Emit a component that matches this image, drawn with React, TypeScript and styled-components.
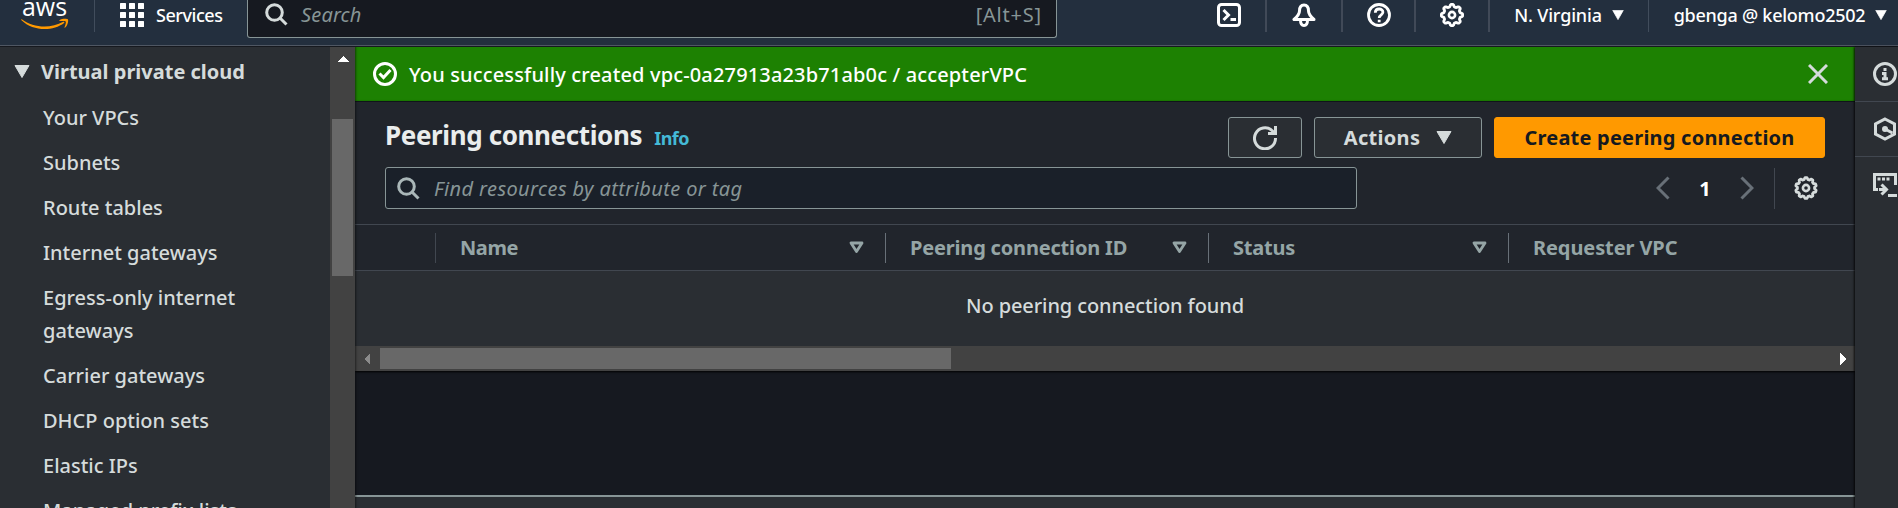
import React from "react";
import styled, { createGlobalStyle } from "styled-components";

const GlobalStyle = createGlobalStyle`
  *, *::before, *::after { box-sizing: border-box; }
  html, body { margin: 0; padding: 0; overflow: hidden; background: #161920; }
  body { font-family: "Noto Sans", "Open Sans", sans-serif; color: #d5dbdb; }
  svg { display: block; flex: none; }
  button { font-family: inherit; }
`;

const Page = styled.div`
  height: 508px;
  width: 1898px;
  display: flex;
  flex-direction: column;
  overflow: hidden;
`;

const Label = styled.span<{ $size: number; $track?: number; $weight?: number; $color?: string; $italic?: boolean }>`
  font-size: ${(p) => p.$size}px;
  letter-spacing: ${(p) => p.$track ?? 0}px;
  font-weight: ${(p) => p.$weight ?? 400};
  color: ${(p) => p.$color ?? "inherit"};
  font-style: ${(p) => (p.$italic ? "italic" : "normal")};
  white-space: nowrap;
`;

/* ---------- top navigation ---------- */
const TopNav = styled.header`
  flex: none;
  height: 47px;
  background: #232f3e;
  border-bottom: 1px solid #16191f;
  box-shadow: inset 0 -1px 0 #4f5763;
  display: flex;
  align-items: flex-start;
  color: #fff;
`;
const LogoCell = styled.div`
  width: 95px;
  height: 32px;
  padding-left: 21px;
  border-right: 1px solid #414d5c;
`;
const ServicesCell = styled.div`
  width: 152px;
  height: 30px;
  padding-left: 25px;
  display: flex;
  align-items: center;
  gap: 12px;
`;
const GlobalSearch = styled.div`
  width: 810px;
  height: 38px;
  padding: 0 14px 8px 17px;
  background: #161920;
  border: 1px solid #879596;
  border-top: 0;
  border-radius: 0 0 3px 3px;
  display: flex;
  align-items: center;
  gap: 13px;
`;
const Shortcut = styled.div`
  margin-left: auto;
`;
const NavTools = styled.div`
  flex: 1;
  display: flex;
  justify-content: flex-end;
`;
const NavCell = styled.div<{ $width: number; $last?: boolean; $thin?: boolean }>`
  width: ${(p) => p.$width}px;
  height: 32px;
  padding: 0 0 2px ${(p) => (p.$last ? "14px" : "0")};
  display: flex;
  align-items: center;
  justify-content: center;
  gap: 10px;
  border-right: ${(p) => (p.$last ? "0" : p.$thin ? "1px solid #414d5c" : "2px solid #414a58")};
`;

/* ---------- body ---------- */
const Body = styled.div`
  flex: 1;
  min-height: 0;
  display: flex;
`;
const SideNav = styled.nav`
  width: 330px;
  flex: none;
  background: #2a2e33;
  padding-top: 8px;
  overflow: hidden;
`;
const SectionTitle = styled.div`
  height: 33px;
  margin-bottom: 13px;
  padding-left: 14px;
  display: flex;
  align-items: center;
  gap: 11px;
`;
const NavList = styled.ul`
  list-style: none;
  margin: 0;
  padding: 0 0 0 43px;
`;
const NavItem = styled.li`
  line-height: 33px;
  margin-bottom: 12px;
  width: 240px;
`;
const NavLink = styled.a`
  display: block;
  font-size: 20px;
  font-weight: 500;
  white-space: pre-line;
`;
const VScroll = styled.div`
  width: 25px;
  flex: none;
  background: #424242;
  display: flex;
  flex-direction: column;
  align-items: center;
  gap: 57px;
  padding-top: 9px;
  position: relative;
  z-index: 1;
  box-shadow: 0 0 2px 1px rgba(0, 0, 0, 0.5);
  clip-path: inset(0 -4px 0 0);
`;
const VThumb = styled.div`
  width: 21px;
  height: 157px;
  background: #686868;
`;
const Main = styled.main`
  width: 1500px;
  flex: none;
  display: flex;
  flex-direction: column;
  background: #161920;
  overflow: hidden;
`;
const Flash = styled.div`
  height: 54px;
  flex: none;
  background: #1d8102;
  color: #fff;
  display: flex;
  align-items: center;
  padding: 0 27px 0 18px;
  gap: 12px;
`;
const CloseIcon = styled.div`
  margin-left: auto;
`;
const Container = styled.section`
  height: 270px;
  flex: none;
  background: #21252c;
  border-top: 1px solid #10141a;
  box-shadow: 0 1px 2px 0 #000;
`;
const TitleRow = styled.div`
  height: 57px;
  padding: 15px 30px 0;
  display: flex;
  justify-content: space-between;
`;
const Title = styled.div`
  display: flex;
  align-items: baseline;
  gap: 12px;
  line-height: 36px;
`;
const Actions = styled.div`
  display: flex;
  gap: 12px;
`;
const Button = styled.button<{ $width: number; $primary?: boolean }>`
  width: ${(p) => p.$width}px;
  height: 41px;
  padding: 0;
  border: 1px solid ${(p) => (p.$primary ? "#ff9900" : "#879596")};
  border-radius: 3px;
  background: ${(p) => (p.$primary ? "#ff9900" : "#2a2e33")};
  color: ${(p) => (p.$primary ? "#16191f" : "#d5dbdb")};
  display: flex;
  align-items: center;
  justify-content: center;
  gap: 16px;
`;
const FilterRow = styled.div`
  height: 65px;
  padding: 8px 30px 0;
  display: flex;
  justify-content: space-between;
`;
const FilterInput = styled.div`
  width: 972px;
  height: 42px;
  padding-left: 11px;
  background: #1a2029;
  border: 1px solid #879596;
  border-radius: 3px;
  display: flex;
  align-items: center;
  gap: 14px;
`;
const Pager = styled.div`
  display: flex;
  align-items: center;
  height: 42px;
  color: #fff;
`;
const PageNumber = styled.div`
  width: 70px;
  text-align: center;
`;
const PagerSettings = styled.div`
  height: 41px;
  margin-left: 20px;
  padding: 0 7px 0 19px;
  border-left: 1px solid #414750;
  display: flex;
  align-items: center;
`;
const HeadRow = styled.div`
  height: 47px;
  border: solid #414750;
  border-width: 1px 0;
  display: flex;
  align-items: center;
`;
const HeadCell = styled.div<{ $width: number; $line?: string }>`
  width: ${(p) => p.$width}px;
  height: 30px;
  padding: 0 21px 0 24px;
  border-right: ${(p) => (p.$line ? `1px solid ${p.$line}` : "0")};
  display: flex;
  align-items: center;
  justify-content: space-between;
  flex: none;
`;
const Empty = styled.div`
  height: 75px;
  padding: 0 0 7px 0;
  background: #2a2e33;
  display: flex;
  align-items: center;
  justify-content: center;
`;
const HScroll = styled.div`
  height: 25px;
  background: #424242;
  display: flex;
  align-items: center;
  padding: 0 9px;
  gap: 10px;
`;
const HThumb = styled.div`
  width: 571px;
  height: 21px;
  background: #686868;
`;
const ScrollEnd = styled.div`
  margin-left: auto;
`;
const SplitPanel = styled.div`
  height: 13px;
  margin-top: auto;
  background: #2a2e33;
  border-top: 2px solid #879596;
`;
const Rail = styled.aside`
  width: 43px;
  flex: none;
  background: #2a2e33;
  box-shadow: -1px 0 2px rgba(0, 0, 0, 0.8);
`;
const RailItem = styled.div<{ $last?: boolean }>`
  height: 55px;
  padding-left: 18px;
  display: flex;
  align-items: center;
  border-bottom: ${(p) => (p.$last ? "0" : "1px solid #414750")};
`;

/* ---------- icons ---------- */
const Caret = ({ w, h, color }: { w: number; h: number; color: string }) => (
  <svg width={w} height={h} viewBox="0 0 16 13" preserveAspectRatio="none">
    <path d="M1 .5h14L8 12.5z" fill={color} stroke={color} strokeLinejoin="round" />
  </svg>
);
const SortIcon = () => (
  <svg width="15" height="13" viewBox="0 0 15 13">
    <path d="M2 2h11L7.500 10.500z" fill="none" stroke="#95a5a6" strokeWidth="2.800" strokeLinejoin="round" />
  </svg>
);
const ScrollArrow = ({ d, w, h, color }: { d: string; w: number; h: number; color: string }) => (
  <svg width={w} height={h} shapeRendering="crispEdges"><path d={d} fill={color} /></svg>
);
const SearchIcon = ({ color }: { color: string }) => (
  <svg width="23" height="23" viewBox="0 0 23 23" fill="none" stroke={color} strokeWidth="3">
    <circle cx="9.500" cy="9.500" r="7.800" /><path d="M15 15l6.500 6.500" />
  </svg>
);
const Gear = ({ color, teeth, depth }: { color: string; teeth: number; depth: number }) => {
  const pts: string[] = [];
  const n = teeth * 16;
  for (let i = 0; i < n; i++) {
    const a = (i / n) * Math.PI * 2;
    const wave = Math.max(-1, Math.min(1, Math.cos(a * teeth) * 1.7));
    const r = 9.5 + depth * wave;
    pts.push(`${(12 + r * Math.sin(a)).toFixed(2)},${(12 - r * Math.cos(a)).toFixed(2)}`);
  }
  return (
    <svg width="24" height="24" fill="none" stroke={color}>
      <polygon points={pts.join(" ")} strokeWidth="2.800" strokeLinejoin="round" />
      <circle cx="12" cy="12" r="3.100" strokeWidth="2.600" />
    </svg>
  );
};
const AwsLogo = () => (
  <svg width="48" height="32" viewBox="0 0 48 32">
    <text x="1" y="15.500" fontSize="25" fontFamily="Open Sans" fontWeight="500" fill="#fff" textLength="45" lengthAdjust="spacingAndGlyphs">aws</text>
    <path d="M.8 19.300c12 9 29 9.500 41.500 2.500.8-.4 1.500.5.8 1.200C32 31.500 12 31.500.5 20.300c-.5-.5-.3-1.200.3-1z" fill="#ff9900" />
    <path d="M38.500 20.200c2-1.500 7.500-1.900 8.400-.8.800 1.200-.3 6-2.700 8.200-.5.400-.9.200-.7-.4.700-1.600 1.800-4.900 1.200-5.700-.6-.8-4-.6-5.700-.4-.7.100-.9-.5-.5-.9z" fill="#ff9900" />
  </svg>
);
const AppsIcon = () => (
  <svg width="24" height="24" fill="#fff">
    {[0, 9, 18].map((y) => [0, 9, 18].map((x) => <rect key={`${x}-${y}`} x={x} y={y} width="6" height="6" rx=".5" />))}
  </svg>
);
const TerminalIcon = () => (
  <svg width="24" height="24" fill="none" stroke="#fff" strokeWidth="3">
    <rect x="1.500" y="1.500" width="21" height="21" rx="3" />
    <path d="M6.500 7l5 5-5 5M13.500 16.500h5.500" />
  </svg>
);
const BellIcon = () => (
  <svg width="24" height="24" fill="none" stroke="#fff" strokeWidth="3" strokeLinejoin="round">
    <path d="M12 2C8.500 2 7.500 4.500 7.500 8c0 3-1.500 5-5.500 8.500h20C18 13 16.500 11 16.500 8c0-3.500-1-6-4.500-6zM8.500 17c0 3 1 5.500 3.500 5.500s3.500-2.500 3.500-5.500" />
  </svg>
);
const HelpIcon = () => (
  <svg width="24" height="24" fill="none" stroke="#fff" strokeWidth="2.800">
    <circle cx="12" cy="12" r="10.500" />
    <path d="M8.300 9.700c0-5 7.800-4.700 7.600-.4-.1 2.600-3.700 2.500-3.700 5.700M12.200 16.700v2.600" />
  </svg>
);
const CheckIcon = () => (
  <svg width="24" height="24" fill="none" stroke="#fff" strokeWidth="3">
    <circle cx="12" cy="12" r="10.500" /><path d="M6.500 11.500l4 4 7-7.500" />
  </svg>
);
const RefreshIcon = () => (
  <svg width="24" height="24" fill="none" stroke="#d5dbdb" strokeWidth="3">
    <path d="M22.500 12A10.500 10.500 0 1 1 19 4.500L21.500 7M15 7.500h7.500V0" />
  </svg>
);
const Chevron = ({ d }: { d: string }) => (
  <svg width="14" height="24" fill="none" stroke="#687078" strokeWidth="3"><path d={d} /></svg>
);
const InfoIcon = () => (
  <svg width="24" height="24" fill="none" stroke="#d5dbdb" strokeWidth="3">
    <circle cx="12" cy="12" r="10.500" /><path d="M12 6v3M9 11.500h3V17M9 16.700h6" />
  </svg>
);
const HexIcon = () => (
  <svg width="24" height="24" fill="none" stroke="#d5dbdb" strokeWidth="3">
    <path d="M12 2l9.500 5v10L12 22l-9.500-5V7z" /><circle cx="12" cy="12" r="1.500" fill="#d5dbdb" /><path d="M12 12l7.500 4" />
  </svg>
);
const ShellIcon = () => (
  <svg width="24" height="24" fill="none" stroke="#d5dbdb" strokeWidth="3">
    <path d="M5 16.500H1.500v-15h21V12M6 16.500h7M8.500 11.500l5 5-5 5M15 22.500h9" />
    <path d="M4.500 6h12" strokeDasharray="3 1.500" />
  </svg>
);

const navItems = [
  "Your VPCs",
  "Subnets",
  "Route tables",
  "Internet gateways",
  "Egress-only internet\ngateways",
  "Carrier gateways",
  "DHCP option sets",
  "Elastic IPs",
  "Managed prefix lists",
];

const columns = [
  { name: "Name", width: 450, track: -0.4 },
  { name: "Peering connection ID", width: 323, track: -0.18 },
  { name: "Status", width: 300, track: -0.2 },
];

export default function App() {
  return (
    <Page>
      <GlobalStyle />
      <TopNav>
        <LogoCell><AwsLogo /></LogoCell>
        <ServicesCell><AppsIcon /><Label $size={18} $weight={500} $track={-0.45}>Services</Label></ServicesCell>
        <GlobalSearch>
          <SearchIcon color="#d5dbdb" />
          <Label $size={20} $italic $track={0.15} $color="#879596">Search</Label>
          <Shortcut><Label $size={20} $track={0.8} $color="#879596">[Alt+S]</Label></Shortcut>
        </GlobalSearch>
        <NavTools>
          <NavCell $width={75}><TerminalIcon /></NavCell>
          <NavCell $width={76}><BellIcon /></NavCell>
          <NavCell $width={73}><HelpIcon /></NavCell>
          <NavCell $width={74}><Gear color="#fff" teeth={8} depth={1.1} /></NavCell>
          <NavCell $width={159} $thin><Label $size={18} $weight={500} $track={-0.15}>N. Virginia</Label><Caret w={12} h={10} color="#fff" /></NavCell>
          <NavCell $width={249} $last><Label $size={18} $weight={500} $track={-0.25}>gbenga @ kelomo2502</Label><Caret w={12} h={10} color="#fff" /></NavCell>
        </NavTools>
      </TopNav>
      <Body>
        <SideNav>
          <SectionTitle>
            <Caret w={16} h={13} color="#d5dbdb" />
            <Label $size={20} $weight={700}>Virtual private cloud</Label>
          </SectionTitle>
          <NavList>
            {navItems.map((text) => (
              <NavItem key={text}><NavLink>{text}</NavLink></NavItem>
            ))}
          </NavList>
        </SideNav>
        <VScroll>
          <ScrollArrow w={12} h={6} d="M6 0l6 6H0z" color="#fff" />
          <VThumb />
        </VScroll>
        <Main>
          <Flash>
            <CheckIcon />
            <Label $size={20} $weight={500} $track={0.15}>You successfully created vpc-0a27913a23b71ab0c / accepterVPC</Label>
            <CloseIcon>
              <svg width="20" height="20" fill="none" stroke="#d5dbdb" strokeWidth="3"><path d="M1 1l18 18M19 1L1 19" /></svg>
            </CloseIcon>
          </Flash>
          <Container>
            <TitleRow>
              <Title>
                <Label $size={26} $weight={700} $track={-0.38} $color="#eaeded">Peering connections</Label>
                <Label $size={18} $weight={700} $track={-0.5} $color="#44b9d6">Info</Label>
              </Title>
              <Actions>
                <Button $width={74}><RefreshIcon /></Button>
                <Button $width={168}><Label $size={20} $weight={700} $track={0.3}>Actions</Label><Caret w={16} h={13} color="#d5dbdb" /></Button>
                <Button $width={331} $primary><Label $size={20} $weight={700} $track={0.22}>Create peering connection</Label></Button>
              </Actions>
            </TitleRow>
            <FilterRow>
              <FilterInput>
                <SearchIcon color="#aab7b8" />
                <Label $size={20} $italic $track={0.4} $color="#879596">Find resources by attribute or tag</Label>
              </FilterInput>
              <Pager>
                <Chevron d="M12.500 1.500L2 12l10.500 10.500" />
                <PageNumber><Label $size={20} $weight={700}>1</Label></PageNumber>
                <Chevron d="M1.500 1.500L12 12 1.500 22.500" />
                <PagerSettings><Gear color="#d5dbdb" teeth={10} depth={0.9} /></PagerSettings>
              </Pager>
            </FilterRow>
            <HeadRow>
              <HeadCell $width={81} $line="#414750" />
              {columns.map((c) => (
                <HeadCell key={c.name} $width={c.width} $line="#687078">
                  <Label $size={20} $weight={700} $track={c.track} $color="#95a5a6">{c.name}</Label>
                  <SortIcon />
                </HeadCell>
              ))}
              <HeadCell $width={300}><Label $size={20} $weight={700} $track={-0.1} $color="#95a5a6">Requester VPC</Label></HeadCell>
            </HeadRow>
            <Empty><Label $size={20} $weight={500} $track={-0.1}>No peering connection found</Label></Empty>
            <HScroll>
              <ScrollArrow w={6} h={12} d="M6 0v12L0 6z" color="#8b8b8b" />
              <HThumb />
              <ScrollEnd><ScrollArrow w={6} h={12} d="M0 0v12l6-6z" color="#fff" /></ScrollEnd>
            </HScroll>
          </Container>
          <SplitPanel />
        </Main>
        <Rail>
          <RailItem><InfoIcon /></RailItem>
          <RailItem><HexIcon /></RailItem>
          <RailItem $last><ShellIcon /></RailItem>
        </Rail>
      </Body>
    </Page>
  );
}
